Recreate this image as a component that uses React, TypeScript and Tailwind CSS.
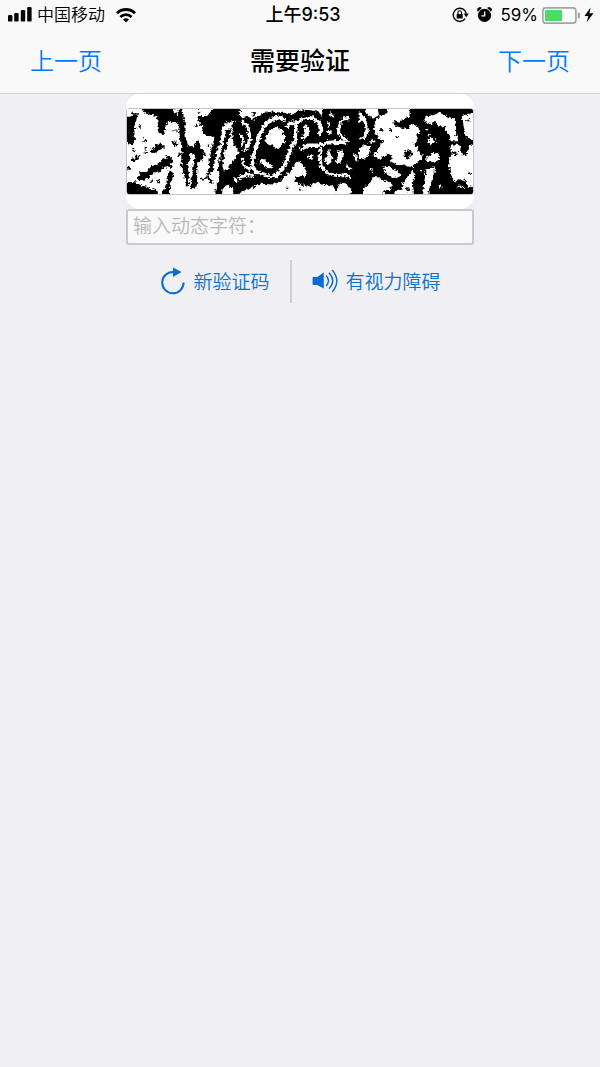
import type { ReactNode } from "react";

function SignalIcon() {
  return (
    <svg width="24" height="16" viewBox="0 0 24 16" aria-hidden="true">
      <rect x="0" y="8" width="4.4" height="6.6" rx="1.2" />
      <rect x="6.2" y="6" width="4.4" height="8.6" rx="1.2" />
      <rect x="12.8" y="3" width="4.4" height="11.6" rx="1.2" />
      <rect x="19.2" y="0" width="4.4" height="14.6" rx="1.2" />
    </svg>
  );
}

function WifiIcon() {
  return (
    <svg width="20" height="15" viewBox="0 0 20 15" aria-hidden="true">
      <path d="M1 5.2a12.8 12.8 0 0 1 18 0" fill="none" stroke="#000" strokeWidth="2.8" />
      <path d="M4.4 9a7.9 7.9 0 0 1 11.2 0" fill="none" stroke="#000" strokeWidth="2.6" />
      <path d="M10 14.6 7 11.6a4.4 4.4 0 0 1 6 0Z" />
    </svg>
  );
}

function RotationLockIcon() {
  return (
    <svg width="17" height="16" viewBox="0 0 17 16" aria-hidden="true">
      <path d="M13.2 11.7A6.6 6.6 0 1 1 14.3 6.5" fill="none" stroke="#000" strokeWidth="1.4" />
      <path d="M11.6 6.6h5.2l-2.6 3.6Z" />
      <rect x="4.7" y="7" width="6" height="4.4" rx="0.5" />
      <path d="M5.9 7.2V5.6a1.8 1.8 0 0 1 3.6 0v1.6" fill="none" stroke="#000" strokeWidth="1.1" />
    </svg>
  );
}

function AlarmIcon() {
  return (
    <svg width="15" height="16" viewBox="0 0 15 16" aria-hidden="true">
      <circle cx="7.5" cy="8.4" r="6.6" />
      <path d="M0.9 4.2A2.4 2.4 0 0 1 4.4 1Z M14.1 4.2A2.4 2.4 0 0 0 10.6 1Z" stroke="#000" strokeWidth="0.8" />
      <path d="M7.7 4.4v4.5H4.4" fill="none" stroke="#f9f9f9" strokeWidth="1.3" />
    </svg>
  );
}

function BatteryIcon() {
  return (
    <svg width="38" height="17" viewBox="0 0 38 17" aria-hidden="true">
      <rect x="0.9" y="0.9" width="33" height="15.2" rx="2.8" fill="#fff" stroke="#a3a3a5" strokeWidth="1.6" />
      <rect x="3" y="3" width="17" height="11" rx="0.6" fill="#4cd964" />
      <path d="M35.8 5.5a3 3 0 0 1 0 6Z" fill="#a3a3a5" />
    </svg>
  );
}

function BoltIcon() {
  return (
    <svg width="10" height="16" viewBox="0 0 10 16" aria-hidden="true">
      <path d="M6.6 0.6 0.5 9h3.8L2.6 15.2 9.5 6.3H5.4Z" />
    </svg>
  );
}

function RefreshIcon() {
  return (
    <svg width="24" height="28" viewBox="0 0 24 28" aria-hidden="true">
      <path d="M22.6 15.6A10.7 10.7 0 1 1 12 4.9" fill="none" stroke="#0a6bd0" strokeWidth="2" />
      <path d="M12 0.4 20.6 5 12 10Z" fill="#0a6bd0" />
    </svg>
  );
}

function SpeakerIcon() {
  return (
    <svg width="26" height="24" viewBox="0 0 26 24" aria-hidden="true">
      <path d="M0.6 8h4.6L11.8 3.6v16L5.2 16H0.6Z" fill="#0a6bd0" />
      <g fill="none" stroke="#0a6bd0" strokeWidth="1.4">
        <path d="M14 6.6q5 5.4 0 10.4" />
        <path d="M17 3.8q7.4 8.2 0 16" />
        <path d="M20.2 1q9.2 10.8 0 22" />
      </g>
    </svg>
  );
}

function ChallengeImage() {
  return (
    <svg
      className="block h-auto w-full"
      viewBox="21 55 1040 255"
      role="img"
      aria-label="动态字符"
    >
      <defs>
        <filter id="rough" x="0" y="0" width="100%" height="100%">
          <feTurbulence type="fractalNoise" baseFrequency="0.12" numOctaves="3" seed="4" />
          <feDisplacementMap in="SourceGraphic" scale="17" xChannelSelector="R" yChannelSelector="G" />
        </filter>
      </defs>
      <rect x="0" y="40" width="1080" height="290" fill="#fff" />
      <g filter="url(#rough)">
        <rect x="0" y="30" width="1090" height="300" fill="#fff" />
        <path d="M10 78 34 78 38 68 54 68 48 92 42 110 45 145 38 165 25 160 10 140Z" />
        <path d="M58 40H184L192 80 197 110 197 140 206 165 222 168 226 152 238 150 243 172 258 190 247 206 232 216 232 262 230 290 214 298 212 270 220 240 222 212 226 196 220 186 211 190 210 210 202 218 206 250 208 284 198 288 194 260 187 230 184 200 187 170 182 140 175 120 178 102 160 95 145 94 136 104 138 116 128 130 116 126 112 110 116 90 100 74 76 68Z" />
        <path d="M158 40H174L178 74 166 66Z" fill="#fff" />
        <path d="M88 178 104 172 112 158 134 162 134 172 114 180 108 188 92 186Z M70 142 84 146 76 156Z M154 152 164 150 174 162 168 168 158 160Z" />
        <path d="M30 206 46 202 48 192 60 194 54 206 40 214 32 212Z M22 226 34 236 22 240Z M36 176 48 174 42 186Z" />
        <path d="M128 206 144 196 154 196 158 216 152 232 132 230 114 246 96 250 82 266 62 272 52 262 60 246 78 244 94 228 110 222Z" />
        <path d="M10 286 24 274 50 276 64 286 78 288 96 296 112 298 116 320H10Z" />
        <path d="M146 240 162 246 156 270 150 290 150 320H116L128 304 138 286Z" />
        <path d="M232 90 238 76 258 76 272 68 284 40H366V96L334 92 318 96 306 110 308 122 302 138 300 160 290 178 286 205 280 240 270 250 268 262 282 274 272 278 258 262 268 230 266 205 276 170 284 140 266 136 250 130 246 106Z" />
        <path d="M318 122 334 112 330 136 322 160 314 190 308 225 312 244 328 232 342 208 356 190 366 190V320H346L338 294 318 286 308 296 306 320H288L286 296 298 270 294 240 300 205 310 160Z" />
        <path d="M338 98 366 88V180L346 170 338 150Z" />
        <path d="M314 290 328 282 338 300 334 320H312Z M344 262 356 268 352 278 342 274Z" fill="#fff" />

        <g transform="translate(360 0)">
          <path d="M-4 84 24 78 38 88 62 72 88 62 130 66 156 72 180 60 210 58 238 64 246 80 252 40H364V320H-4Z" />
          <path d="M0 300 36 290 62 280 100 282 122 274 134 256 150 244 174 212 192 222 196 238 206 252 186 256 170 260 166 274 186 286 216 284 228 276 246 282 270 286 286 292 288 310 302 276 322 280 336 300 330 320H0Z" fill="#fff" />
          <path d="M-4 270 40 262 60 270 52 286 24 296 -4 306Z" />
          <g fill="none" stroke="#fff" strokeWidth="11" strokeLinejoin="bevel">
            <path d="M140 90 118 80 92 88 72 108 56 140 50 170 40 198 38 228 52 246 84 256 108 258 124 240 138 218 152 180 166 150 168 120 170 96 190 84 220 82 238 96 246 118 238 132" />
            <path d="M140 112 150 98 168 98" />
            <path d="M182 176 206 164 236 164 268 156 300 154 320 156" />
            <path d="M246 172 240 200 246 232 262 246 290 256 316 252 336 262" strokeWidth="9" />
            <path d="M330 84 312 84 302 96 296 120 304 138 326 152" strokeWidth="9" />
            <path d="M4 92 22 104 28 124 30 144 24 166 10 184" strokeWidth="9" />
            <path d="M0 128 10 148 4 170M6 200 12 226 34 236" strokeWidth="7" />
            <path d="M-4 262 24 252 44 256" strokeWidth="9" />
            <path d="M266 92 268 108M262 126 276 124M318 224 336 238M344 190 352 210M270 68 280 76" strokeWidth="8" />
          </g>
          <path d="M84 126 100 114 112 106 122 112 132 126 134 152 126 164 112 180 102 166 84 162 74 150Z M56 206 72 204 82 214 98 222 100 234 82 232 68 222Z" fill="#fff" />
          <path d="M186 100 208 112 212 130 194 150 184 144 196 126Z M262 176 272 184 280 214 262 220 254 208 264 196Z M292 184 308 178 312 196 302 220 288 212 296 200Z M206 192 222 196 218 208 204 204Z" fill="#fff" />
          <path d="M92 186 112 190 104 210 92 204Z M140 292h6v6h-6Z M178 292h8v8h-8Z" />
          <path d="M174 262 206 260 218 270 212 278 186 276Z" />
          <path d="M0 40H62L46 72 30 78 16 80 0 78Z" fill="#fff" />
          <path d="M38 64h10v10h-10Z" />
        </g>

        <g transform="translate(720 0)">
          <path d="M0 40H348V320H0Z" />
          <path d="M90 40H152L150 78 132 84 120 96 102 90 104 104 124 114 146 112 152 104 164 100 178 116 182 128 170 132 176 146 164 158 170 170 186 190 188 204 176 216 160 222 162 230 146 228 132 222 112 222 92 212 98 196 88 190 76 196 66 204 50 206 42 194 56 178 64 160 74 150 58 142 48 128 42 112 46 96 62 74 82 72Z" fill="#fff" />
          <path d="M14 40H54L58 76 40 84 32 76 20 70Z M0 62 16 82 20 96 0 90Z" fill="#fff" />
          <path d="M-2 88 16 92 24 116 14 142 0 146" fill="none" stroke="#fff" strokeWidth="8" />
          <path d="M-2 176 18 160 32 168 30 186 20 204 -2 206Z M34 144 46 150 44 158 32 156Z" fill="#fff" />
          <path d="M194 94 200 78 226 72 240 64 262 76 284 84 290 104 290 130 298 152 274 152 270 132 260 122 256 106 234 108 232 94 214 100Z" fill="#fff" />
          <path d="M306 76 348 66V146H328L318 136 314 110Z" fill="#fff" />
          <path d="M274 160 300 164 304 178 308 194 322 192 330 160 348 166V290L328 288 316 268 298 266 290 276 280 266 274 248 274 234 266 224 270 206 274 196Z" fill="#fff" />
          <path d="M202 198 216 192 224 184 238 190 240 208 218 214 200 210Z M206 154 214 136 224 148 230 152 212 164 204 160Z M236 286 250 284 242 296Z" fill="#fff" />
          <path d="M198 238 226 230 226 246 218 262 216 280 208 300 206 320H190L194 280 196 262Z" fill="#fff" />
          <path d="M70 228 90 230 110 238 124 252 118 262 100 262 80 248Z M34 234 44 240 34 246Z" fill="#fff" />
          <path d="M4 320 16 290 30 278 42 260 60 260 68 270 90 274 100 284 90 298 74 302 70 320Z" fill="#fff" />
          <path d="M160 240 168 252 160 276 164 320H100L108 302 126 298 130 278 146 256Z" fill="#fff" />
          <path d="M134 184 150 178 162 184 152 200 138 206Z M62 112h8v8h-8Z M90 116h8v8h-8Z M108 136h7v7h-7Z M140 290h8v12h-8Z M276 182 296 184 292 194 276 192Z M324 84h8v8h-8Z M328 246h7v7h-7Z" />
          <path d="M198 112h8v7h-8Z M204 130h7v7h-7Z M182 236h6v6h-6Z M292 286h22v6h-22Z" fill="#fff" />
        </g>
        <path d="M56 104h7v7h-7Z M74 170h7v7h-7Z M74 182h7v7h-7Z M226 102h7v7h-7Z M234 62h7v7h-7Z M264 162h7v7h-7Z M160 116h7v7h-7Z M112 268h8v7h-8Z M92 270h7v7h-7Z M180 222h8v7h-8Z M242 262h10v8h-10Z M176 188h7v8h-7Z" />
      </g>
    </svg>
  );
}

function ActionLink({ icon, children }: { icon: ReactNode; children: ReactNode }) {
  return (
    <a href="#" className="flex items-center gap-2 text-[19px] leading-6 font-[350] text-[#0a72cf]">
      {icon}
      <span className="pt-[3px]">{children}</span>
    </a>
  );
}

export default function App() {
  return (
    <div className="min-h-screen bg-[#efeff4] font-['Inter','Noto_Sans_CJK_SC',sans-serif] text-black">
      <header className="border-b border-[#d2d2d5] bg-[#f9f9f9]">
        <div className="grid h-[30px] grid-cols-[1fr_auto_1fr] items-center pr-[6px] pl-2 text-[17px] leading-6">
          <div className="flex items-center gap-[5px]">
            <SignalIcon />
            <span className="mr-[6px] font-[350]">中国移动</span>
            <WifiIcon />
          </div>
          <time className="pl-1 text-lg leading-6 font-medium">上午9:53</time>
          <div className="flex items-center justify-end">
            <RotationLockIcon />
            <span className="mr-2 ml-2"><AlarmIcon /></span>
            <span className="mr-1">59%</span>
            <BatteryIcon />
            <span className="ml-1"><BoltIcon /></span>
          </div>
        </div>
        <nav className="grid h-[63px] grid-cols-[1fr_auto_1fr] items-center px-[30px] text-2xl">
          <button type="button" className="justify-self-start font-[350] text-[#007aff]">上一页</button>
          <h1 className="text-[25px] font-medium">需要验证</h1>
          <button type="button" className="justify-self-end font-[350] text-[#007aff]">下一页</button>
        </nav>
      </header>

      <main className="mx-auto w-[348px] max-w-full">
        <div className="rounded-[14px] bg-white py-[14px]">
          <div className="overflow-hidden rounded-[3px] border border-[#c4c4c8]">
            <ChallengeImage />
          </div>
        </div>
        <input
          type="text"
          aria-label="输入动态字符"
          placeholder="输入动态字符："
          className="block h-9 w-full rounded-[3px] border-2 border-[#c8c8cf] bg-[#f9f9f9] px-[5px] text-[19px] font-[350] outline-none placeholder:text-[#b8b8ba]"
        />
        <div className="mt-[15px] flex h-[43px] items-center justify-center gap-5 pl-[2px]">
          <ActionLink icon={<RefreshIcon />}>新验证码</ActionLink>
          <span className="h-full w-[2px] bg-[#cfcfd4]" />
          <ActionLink icon={<SpeakerIcon />}>有视力障碍</ActionLink>
        </div>
      </main>
    </div>
  );
}
